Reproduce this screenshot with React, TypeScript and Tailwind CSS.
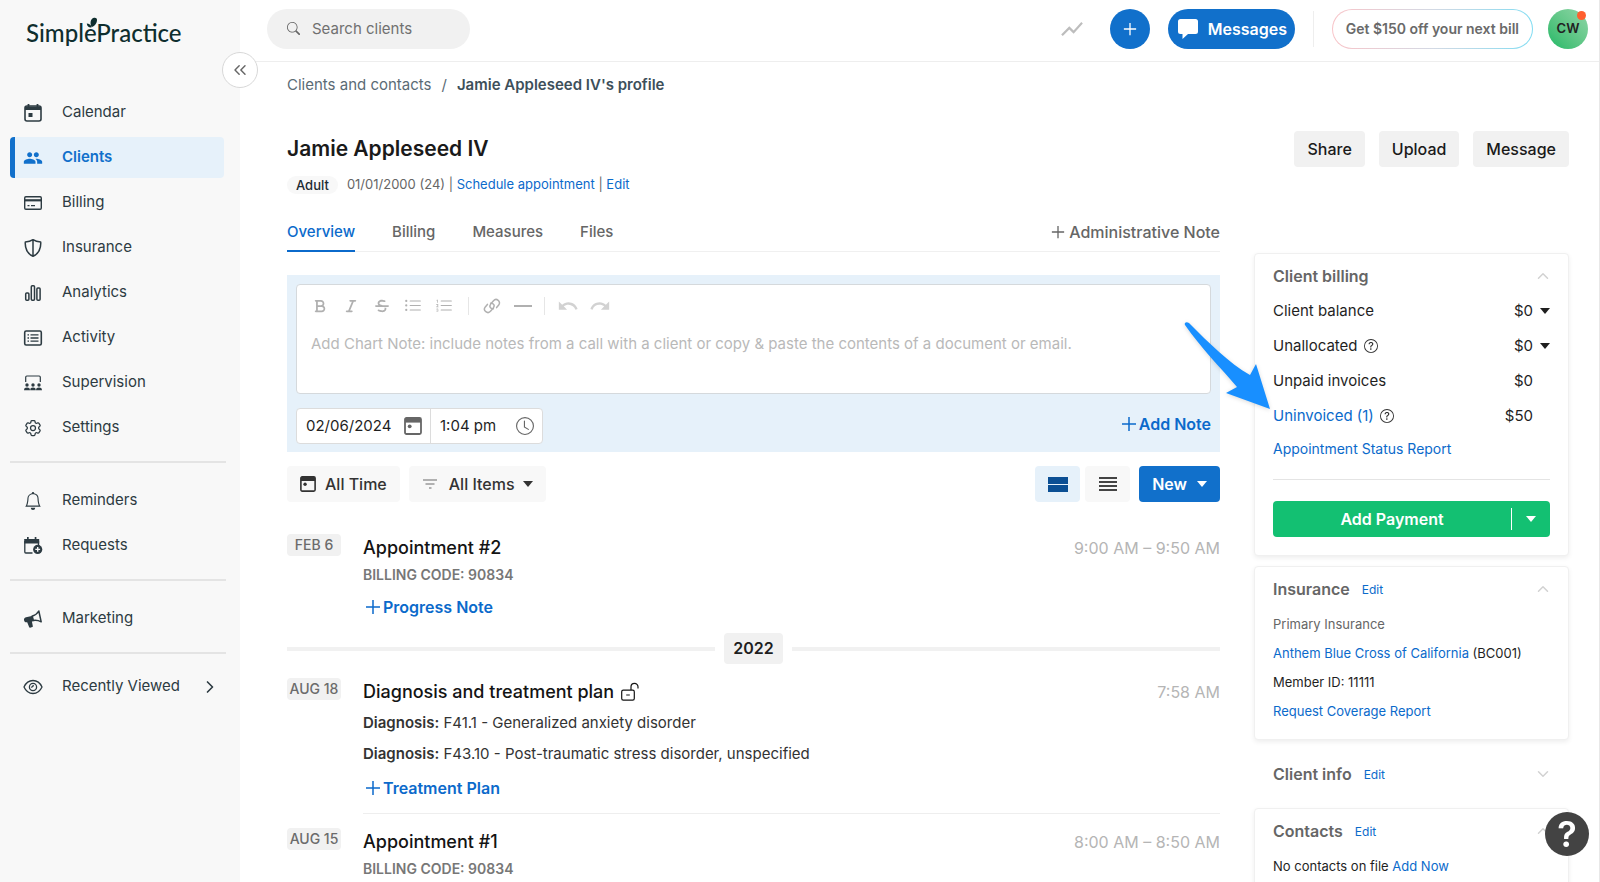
import { ReactNode, useState } from 'react';
import { ChevronDown, ChevronRight, ChevronsLeft, ChevronUp } from 'lucide-react';
import { BsBell, BsClock, BsListOl, BsListUl, BsQuestionCircle, BsSearch } from 'react-icons/bs';
import { FaBold, FaItalic, FaStrikethrough } from 'react-icons/fa6';
import { HiOutlineCog6Tooth } from 'react-icons/hi2';
import { MdPeople, MdRedo, MdShowChart, MdUndo } from 'react-icons/md';

const CalendarIcon = ({ className = 'size-5' }: { className?: string }) => (
  <svg viewBox="0 0 20 20" className={className} fill="none" aria-hidden="true">
    <rect x="2" y="3" width="16" height="15" rx="2" stroke="currentColor" strokeWidth="1.6" />
    <path d="M2 3.5h16V7H2zM4.6 1h1.8v3H4.6zM13.6 1h1.8v3h-1.8zM5.5 10h4v4h-4z" fill="currentColor" />
  </svg>
);

const DateIcon = ({ className = 'size-5' }: { className?: string }) => (
  <svg viewBox="0 0 18 18" className={className} fill="none" aria-hidden="true">
    <rect x="1" y="1" width="16" height="16" rx="1.5" stroke="currentColor" strokeWidth="1.8" />
    <path d="M1 1h16v4.6H1z" fill="currentColor" />
    <circle cx="5.7" cy="9.3" r="1.9" fill="currentColor" />
  </svg>
);

const CardIcon = () => (
  <svg viewBox="0 0 20 20" className="size-5" fill="none" stroke="currentColor" aria-hidden="true">
    <rect x="1.7" y="3.7" width="16.6" height="12.6" rx="1.2" strokeWidth="1.4" />
    <path d="M2 7.3h16" strokeWidth="2.2" />
    <path d="M4.5 12.7h2M8 12.7h4" strokeWidth="1.2" />
  </svg>
);

const ShieldIcon = () => (
  <svg viewBox="0 0 20 20" className="size-5" fill="none" stroke="currentColor" strokeWidth="1.5" strokeLinejoin="round" aria-hidden="true">
    <path d="M10 1.7c2 1.4 5 2.2 7.7 2.3.4 6-1.8 11.5-7.7 14.3C4.1 15.5 1.9 10 2.3 4 5 3.9 8 3.1 10 1.7zM10 1.7v16.6" />
  </svg>
);

const BarsIcon = () => (
  <svg viewBox="0 0 20 20" className="size-5" fill="none" stroke="currentColor" strokeWidth="1.5" aria-hidden="true">
    <rect x="2.7" y="10" width="3.2" height="7.3" rx="1" />
    <rect x="8.3" y="2.7" width="3.2" height="14.6" rx="1" />
    <rect x="13.9" y="5" width="3.2" height="12.3" rx="1" />
  </svg>
);

const ActivityIcon = () => (
  <svg viewBox="0 0 20 20" className="size-5" fill="none" stroke="currentColor" aria-hidden="true">
    <rect x="1.7" y="3" width="16.6" height="14" rx="1.4" strokeWidth="1.6" />
    <path d="M4.5 6.8H6M7.5 6.8h8M4.5 10H6M7.5 10h8M4.5 13.2H6M7.5 13.2h8" strokeWidth="1.3" />
  </svg>
);

const SupervisionIcon = () => (
  <svg viewBox="0 0 20 20" className="size-5" aria-hidden="true">
    <path d="M2.7 9V4.2c0-.8.5-1.2 1.2-1.2h12.2c.7 0 1.2.4 1.2 1.2V9" fill="none" stroke="currentColor" strokeWidth="1.2" />
    <g fill="currentColor">
      <circle cx="4" cy="12" r="1.7" />
      <circle cx="10" cy="12" r="1.7" />
      <circle cx="16" cy="12" r="1.7" />
      <path d="M1 17.2c.2-2 1.2-2.6 3-2.6s2.800.6 3 2.6zM7.200 17.2c.2-2 1-2.6 2.800-2.600s2.600.6 2.800 2.600zM13 17.200c.2-2 1.200-2.600 3-2.600s2.800.6 3 2.600z" />
    </g>
  </svg>
);

const RequestIcon = () => (
  <svg viewBox="0 0 20 20" className="size-5" aria-hidden="true">
    <path d="M9.5 17H2.8c-.6 0-1-.4-1-1V5M15.5 5v5" fill="none" stroke="currentColor" strokeWidth="1.3" />
    <path d="M1.2 3h15v4.500h-15zM4 1h1.700v3H4zM11.700 1h1.700v3h-1.700z" fill="currentColor" />
    <circle cx="14.7" cy="13.4" r="4.6" fill="currentColor" />
    <path d="M14.7 11v4.800M12.300 13.400h4.800" stroke="#f8f8f8" strokeWidth="1.4" />
  </svg>
);

const HornIcon = () => (
  <svg viewBox="0 0 20 20" className="size-5" aria-hidden="true">
    <path d="M9 7.300c3-.9 5.300-2.700 6.800-5.300l2.400 10.800c-2.700-1.400-5.400-1.900-8.200-1.300z" fill="none" stroke="currentColor" strokeWidth="1.5" strokeLinejoin="round" />
    <path d="M10 6.800 3 8.300C1.300 8.700.7 10 1.100 11.400c.4 1.400 1.400 2.200 3.100 1.900l1.900 4.800c.2.500.6.700 1 .6l2.200-.6c.5-.1.700-.5.500-1L8.900 12.400l2-.5z" fill="currentColor" />
  </svg>
);

const EyeIcon = () => (
  <svg viewBox="0 0 20 20" className="size-5" fill="none" stroke="currentColor" strokeWidth="1.3" aria-hidden="true">
    <path d="M1 10c2-4.400 5.200-6.500 9-6.500s7 2.100 9 6.500c-2 4.400-5.200 6.500-9 6.500S3 14.400 1 10z" />
    <circle cx="10" cy="10" r="3.6" />
    <path d="M8 10.200A2 2 0 0 0 10.200 8" />
  </svg>
);

const UnlockIcon = () => (
  <svg viewBox="0 0 20 20" className="size-5" fill="none" stroke="currentColor" strokeWidth="1.2" aria-hidden="true">
    <rect x="1.7" y="8.2" width="12.6" height="10" rx="1.6" />
    <path d="M11 8V4.800a3.500 3.500 0 0 1 7 0v1.700M6.200 13h3.600" />
  </svg>
);

const LinkIcon = () => (
  <svg viewBox="0 0 18 18" className="size-[18px]" fill="none" stroke="currentColor" strokeWidth="1.5" strokeLinecap="round" aria-hidden="true">
    <path d="M10.400 11.800c-1.300.2-2.600-.4-3.200-1.400-.7-1.200-.3-2.400.6-3.500l2.500-3c1.300-1.500 3.500-1.700 4.900-.6 1.500 1.200 1.700 3.300.5 4.800l-2.100 2.500" />
    <path d="M7.600 6.200c1.300-.2 2.600.4 3.200 1.400.7 1.200.3 2.400-.6 3.500l-2.500 3c-1.300 1.500-3.500 1.700-4.900.6C1.300 13.500 1.100 11.400 2.300 9.900l2.100-2.500" />
  </svg>
);

const Caret = ({ className = '' }: { className?: string }) => (
  <svg viewBox="0 0 10 6" className={`w-2.5 h-1.5 ${className}`} aria-hidden="true">
    <path d="M0 0h10L5 6z" fill="currentColor" />
  </svg>
);

const ThinPlus = ({ className = 'size-4' }: { className?: string }) => (
  <svg viewBox="0 0 16 16" className={className} stroke="currentColor" strokeWidth="1.5" aria-hidden="true">
    <path d="M8 1v14M1 8h14" />
  </svg>
);

const navGroups = [
  [
    { label: 'Calendar', icon: <CalendarIcon /> },
    { label: 'Clients', icon: <MdPeople className="size-5" /> },
    { label: 'Billing', icon: <CardIcon /> },
    { label: 'Insurance', icon: <ShieldIcon /> },
    { label: 'Analytics', icon: <BarsIcon /> },
    { label: 'Activity', icon: <ActivityIcon /> },
    { label: 'Supervision', icon: <SupervisionIcon /> },
    { label: 'Settings', icon: <HiOutlineCog6Tooth className="size-5" /> },
  ],
  [
    { label: 'Reminders', icon: <BsBell className="size-[18px]" /> },
    { label: 'Requests', icon: <RequestIcon /> },
  ],
  [{ label: 'Marketing', icon: <HornIcon /> }],
  [{ label: 'Recently Viewed', icon: <EyeIcon /> }],
];

const Sidebar = () => (
  <aside className="relative w-60 shrink-0 bg-[#f8f8f8] text-[15px] text-[#2d3b42]">
    <a href="#" className="relative block w-fit ml-[26px] mt-[15px] font-['Lato',sans-serif] text-2xl leading-9 font-medium text-[#0f2e2e]">
      SimplePractice
      <svg viewBox="0 0 12 12" className="absolute left-[60px] top-[2px] size-3" aria-hidden="true">
        <path d="M5.500 9.500C4 7 4 2 8 .8c1.500-.4 3 .2 3 2C11 6 9 9.500 5.500 10zM5.500 10.500C3 10.800 1 9.500.8 6.500 3 6.500 5 7.500 5.500 10.500z" fill="currentColor" />
      </svg>
    </a>
    <nav className="mt-[41px] pl-2.5 pr-3.5">
      {navGroups.map((group, index) => (
        <div
          key={index}
          className={
            index === 0
              ? 'flex flex-col gap-1'
              : 'flex flex-col gap-1 mt-[13px] pt-[17px] last:pt-3 border-t-2 border-[#e4e4e4]'
          }
        >
          {group.map(({ label, icon }) => (
            <a
              key={label}
              href="#"
              className={
                label === 'Clients'
                  ? 'flex items-center h-[41px] mr-0.5 rounded-sm border-l-[5px] border-[#1170cb] bg-[#e6f1fa] pl-2 text-[#1170cb] font-semibold'
                  : 'flex items-center h-[41px] pl-[13px]'
              }
            >
              <span className="flex w-5 justify-center mr-[19px]">{icon}</span>
              {label}
              {label === 'Recently Viewed' && <ChevronRight className="size-5 ml-5" />}
            </a>
          ))}
        </div>
      ))}
    </nav>
    <button
      aria-label="Collapse menu"
      className="absolute z-10 -right-[18px] top-[52px] flex size-9 items-center justify-center rounded-full border border-[#d8d8d8] bg-white text-[#666]"
    >
      <ChevronsLeft className="size-5" strokeWidth={1.75} />
    </button>
  </aside>
);

const TopBar = () => (
  <header className="flex items-center h-[62px] shrink-0 border-b border-[#eee] pb-1 pl-[27px] pr-[11px]">
    <label className="flex items-center w-[203px] h-10 rounded-full bg-[#f1f1f1] pl-5 text-[#666]">
      <BsSearch className="size-[13px] shrink-0" />
      <input
        type="text"
        aria-label="Search clients"
        placeholder="Search clients"
        className="ml-3 w-36 h-6 bg-transparent text-[15px] outline-none placeholder:text-[#707070]"
      />
    </label>
    <div className="flex items-center ml-auto">
      <MdShowChart className="size-[26px] text-[#bdbdbd]" />
      <button aria-label="Add" className="flex size-10 items-center justify-center rounded-full bg-[#1170cb] text-white ml-[25px]">
        <ThinPlus className="size-3.5" />
      </button>
      <button className="flex items-center h-10 w-[127px] rounded-full bg-[#1170cb] pl-2.5 text-white font-semibold ml-[18px]">
        <svg viewBox="0 0 20 20" className="size-5 mr-2.5" aria-hidden="true">
          <path d="M2.500 0h15A2.500 2.500 0 0 1 20 2.500v10a2.500 2.500 0 0 1-2.500 2.500H10l-5.500 5v-5h-2A2.500 2.500 0 0 1 0 12.500v-10A2.500 2.500 0 0 1 2.500 0z" fill="currentColor" />
        </svg>
        Messages
      </button>
      <span className="w-px h-9 bg-[#eee] ml-[18px]" />
      <button className="h-10 rounded-full bg-gradient-to-r from-[#f8c4c8] via-[#d3d9e4] to-[#7fdcf2] p-px ml-[18px]">
        <span className="flex h-full items-center rounded-full bg-white px-[13px] text-sm font-semibold text-[#6a6a6a]">
          Get $150 off your next bill
        </span>
      </button>
      <button className="relative size-10 rounded-full bg-gradient-to-tr from-[#12b866] to-[#8fd6a8] text-[13px] font-semibold text-[#222] ml-[15px]">
        CW
        <span className="absolute right-0.5 top-0.5 size-[9px] rounded-full bg-[#ff5f2e]" />
      </button>
    </div>
  </header>
);

const tools = [
  { label: 'Bold', icon: <FaBold className="size-3.5" /> },
  { label: 'Italic', icon: <FaItalic className="size-3.5" /> },
  { label: 'Strikethrough', icon: <FaStrikethrough className="size-3.5" /> },
  { label: 'Bulleted list', icon: <BsListUl className="size-[18px]" /> },
  { label: 'Numbered list', icon: <BsListOl className="size-[18px]" /> },
];

const Composer = () => {
  const [note, setNote] = useState('');

  return (
    <section className="mt-[23px] bg-[#e6f1fa] px-[9px] pt-[9px] pb-2">
      <div className="rounded border border-[#d5d9dc] bg-white pt-[9px] px-3.5">
        <div className="flex items-center h-6 text-[#b0b0b0]">
          {tools.map(({ label, icon }) => (
            <button key={label} aria-label={label} className="flex w-[18px] justify-center mr-[13px]">
              {icon}
            </button>
          ))}
          <span className="w-px h-[18px] bg-[#e6e6e6] ml-0.5" />
          <button aria-label="Link" className="ml-3.5"><LinkIcon /></button>
          <button aria-label="Horizontal rule" className="ml-[13px] flex w-[18px] h-4 items-center">
            <span className="h-0.5 w-full bg-current" />
          </button>
          <span className="w-px h-[18px] bg-[#e6e6e6] mx-3" />
          <button aria-label="Undo" className="text-[#d2d2d2]"><MdUndo className="size-[22px]" /></button>
          <button aria-label="Redo" className="ml-2.5 text-[#d2d2d2]"><MdRedo className="size-[22px]" /></button>
        </div>
        <textarea
          aria-label="Chart note"
          value={note}
          onChange={(e) => setNote(e.target.value)}
          placeholder="Add Chart Note: include notes from a call with a client or copy & paste the contents of a document or email."
          className="block mt-3.5 w-full h-[61px] resize-none bg-transparent text-[15px] leading-6 outline-none placeholder:text-[#b9b9b9]"
        />
      </div>
      <div className="flex items-start justify-between mt-3.5">
        <div className="flex h-9 rounded border border-[#dcdcdc] bg-white text-[15px] text-[#1f1f1f]">
          <label className="flex items-center w-[134px] border-r border-[#dcdcdc] pl-[9px] pr-2">
            <input type="text" aria-label="Date" defaultValue="02/06/2024" className="w-[98px] outline-none" />
            <DateIcon className="size-[18px] shrink-0 text-[#666]" />
          </label>
          <label className="flex items-center w-[111px] pl-[9px] pr-1.5">
            <input type="text" aria-label="Time" defaultValue="1:04 pm" className="w-[76px] outline-none" />
            <BsClock className="size-[18px] shrink-0 text-[#666]" />
          </label>
        </div>
        <button className="flex items-center gap-0.5 h-8 font-semibold text-[#0b6acb]">
          <ThinPlus />
          Add Note
        </button>
      </div>
    </section>
  );
};

const Filters = () => (
  <div className="flex items-center h-9 mt-3.5 font-medium text-[#333]">
    <button className="flex items-center h-full rounded bg-[#f8f8f8] px-[13px]">
      <DateIcon className="size-4 mr-[9px]" />
      All Time
    </button>
    <button className="flex items-center h-full rounded bg-[#f8f8f8] pl-3.5 pr-[13px] ml-[9px]">
      <svg viewBox="0 0 14 10" className="w-3.5 h-2.5 mr-3 text-[#999]" stroke="currentColor" strokeWidth="1.4" aria-hidden="true">
        <path d="M0 1h14M2.500 5h9M6 9h2.500" />
      </svg>
      All Items
      <Caret className="ml-2" />
    </button>
    <button aria-label="Card view" className="flex items-center justify-center w-[45px] h-full rounded bg-[#e6f1fa] ml-auto">
      <span className="flex flex-col gap-px">
        <span className="w-5 h-[7px] bg-[#0b4f94]" />
        <span className="w-5 h-[7px] bg-[#0b4f94]" />
      </span>
    </button>
    <button aria-label="List view" className="flex flex-col items-center justify-center gap-0.5 w-[45px] h-full rounded bg-[#f8f8f8] ml-[5px]">
      {[0, 1, 2, 3].map((line) => (
        <span key={line} className="w-[18px] h-0.5 bg-[#444]" />
      ))}
    </button>
    <button className="flex items-center h-full rounded bg-[#1170cb] px-[13px] font-semibold text-white ml-[9px]">
      New
      <Caret className="ml-2.5" />
    </button>
  </div>
);

interface EntryProps {
  date: string;
  time: string;
  title: ReactNode;
  children: ReactNode;
}

const Entry = ({ date, time, title, children }: EntryProps) => (
  <article className="flex items-start">
    <time className="w-[54px] h-[22px] shrink-0 rounded bg-[#f1f1f1] text-center text-sm leading-[22px] font-medium text-[#6b6b6b]">
      {date}
    </time>
    <div className="flex-1 ml-[22px] pt-0.5">
      <div className="flex justify-between leading-6">
        <h3 className="flex items-center gap-1.5 text-lg leading-6 font-medium text-[#141414]">{title}</h3>
        <span className="text-[#b5b5b5]">{time}</span>
      </div>
      {children}
    </div>
  </article>
);

const BillingCode = () => <p className="mt-[5px] text-sm leading-5 font-semibold text-[#777]">BILLING CODE: 90834</p>;

const AddLink = ({ children }: { children: ReactNode }) => (
  <a href="#" className="flex items-center gap-0.5 mt-2.5 pl-0.5 leading-6 font-semibold text-[#0b6acb]">
    <ThinPlus />
    {children}
  </a>
);

const Timeline = () => (
  <section className="mt-8">
    <Entry date="FEB 6" time="9:00 AM – 9:50 AM" title="Appointment #2">
      <BillingCode />
      <AddLink>Progress Note</AddLink>
    </Entry>
    <div className="flex items-center gap-[9px] my-3.5">
      <span className="flex-1 h-1 bg-[#f1f1f1]" />
      <span className="w-[59px] rounded bg-[#f1f1f1] text-center leading-[31px] font-semibold text-[#1f1f1f]">2022</span>
      <span className="flex-1 h-1 bg-[#f1f1f1]" />
    </div>
    <Entry
      date="AUG 18"
      time="7:58 AM"
      title={
        <>
          Diagnosis and treatment plan <UnlockIcon />
        </>
      }
    >
      <p className="mt-[7px] text-[15px] leading-6 text-[#333]">
        <strong className="font-semibold">Diagnosis:</strong> F41.1 - Generalized anxiety disorder
      </p>
      <p className="mt-[7px] text-[15px] leading-6 text-[#333]">
        <strong className="font-semibold">Diagnosis:</strong> F43.10 - Post-traumatic stress disorder, unspecified
      </p>
      <AddLink>Treatment Plan</AddLink>
      <hr className="mt-[13px] border-[#eee]" />
    </Entry>
    <div className="mt-3.5">
      <Entry date="AUG 15" time="8:00 AM – 8:50 AM" title="Appointment #1">
        <BillingCode />
      </Entry>
    </div>
  </section>
);

interface PanelProps {
  title: string;
  edit?: boolean;
  closed?: boolean;
  className?: string;
  children?: ReactNode;
}

const Panel = ({ title, edit, closed, className = '', children }: PanelProps) => {
  const Chevron = closed ? ChevronDown : ChevronUp;
  return (
    <section className={className}>
      <header className="flex items-center h-6">
        <h2 className="leading-6 font-semibold text-[#666]">{title}</h2>
        {edit && <a href="#" className="ml-3 mt-0.5 text-xs text-[#0b6acb]">Edit</a>}
        <button aria-label={`Toggle ${title}`} className="ml-auto -mr-0.5 text-[#d2d2d2]">
          <Chevron className="size-[18px]" />
        </button>
      </header>
      {children}
    </section>
  );
};

const cardClass = 'rounded border border-[#f0f0f0] bg-white px-[18px] pt-2.5 pb-[18px] shadow-[0_2px_5px_rgba(0,0,0,0.07)]';

const balances = [
  { label: 'Client balance', amount: '$0', caret: true },
  { label: 'Unallocated', amount: '$0', caret: true, help: true },
  { label: 'Unpaid invoices', amount: '$0' },
  { label: 'Uninvoiced (1)', amount: '$50', help: true, link: true },
];

const ClientPanels = () => (
  <aside className="relative w-[315px] shrink-0 mt-[58px]">
    <Panel title="Client billing" className={cardClass}>
      <ul className="flex flex-col gap-[11px] mt-[11px]">
        {balances.map(({ label, amount, caret, help, link }) => (
          <li key={label} className="flex items-center h-6 text-[15px] text-[#1f1f1f]">
            {link ? <a href="#" className="text-[#0b6acb]">{label}</a> : label}
            {help && <BsQuestionCircle className="size-3.5 ml-1.5 text-[#333]" />}
            <span className="ml-auto">{amount}</span>
            <span className="flex w-[17px] justify-end">{caret && <Caret />}</span>
          </li>
        ))}
      </ul>
      <a href="#" className="block mt-[9px] text-sm leading-6 text-[#0b6acb]">Appointment Status Report</a>
      <hr className="mt-[18px] border-[#e4e4e4]" />
      <div className="flex items-center h-9 mt-[21px] rounded bg-[#13c072] font-semibold text-white">
        <button className="flex-1 h-full">Add Payment</button>
        <span className="w-px h-[22px] bg-white" />
        <button aria-label="More payment options" className="flex w-[38px] h-full items-center justify-center">
          <Caret />
        </button>
      </div>
    </Panel>
    <Panel title="Insurance" edit className={`${cardClass} mt-2.5`}>
      <div className="flex flex-col gap-[9px] mt-[13px] text-[13px] leading-5 text-[#1f1f1f]">
        <p className="text-[#666]">Primary Insurance</p>
        <p>
          <a href="#" className="text-[#0b6acb]">Anthem Blue Cross of California</a> (BC001)
        </p>
        <p>Member ID: 11111</p>
        <a href="#" className="text-[#0b6acb]">Request Coverage Report</a>
      </div>
    </Panel>
    <Panel title="Client info" edit closed className="px-[19px] py-[22px]" />
    <Panel title="Contacts" edit className={cardClass}>
      <p className="mt-[13px] text-[13px] leading-5 text-[#1f1f1f]">
        No contacts on file <a href="#" className="text-[#0b6acb]">Add Now</a>
      </p>
    </Panel>
    <svg viewBox="0 0 90 92" className="absolute -left-[71px] top-[67px] w-[90px] h-[92px] drop-shadow-sm" aria-hidden="true">
      <path d="M2 5C1 3 3 1 6 3c20 20 40 40 61 52l6-11 14 45-44-16 11-6C37 47 18 28 2 5z" fill="#188fff" />
    </svg>
  </aside>
);

const tabs = ['Overview', 'Billing', 'Measures', 'Files'];

const App = () => {
  const [activeTab, setActiveTab] = useState('Overview');

  return (
    <div className="flex h-screen overflow-hidden border-r border-[#e8e8e8] bg-white font-['Inter',sans-serif] text-base">
      <Sidebar />
      <div className="flex flex-1 flex-col min-w-0">
        <TopBar />
        <main className="flex-1 overflow-hidden pl-[47px] pr-[30px] pt-[11px]">
          <nav aria-label="Breadcrumb" className="flex text-[15px] leading-6 text-[#5b6b75]">
            <a href="#">Clients and contacts</a>
            <span className="mx-2.5">/</span>
            <span className="font-semibold text-[#3d4f5a]">Jamie Appleseed IV's profile</span>
          </nav>
          <div className="flex items-center mt-[34px]">
            <h1 className="text-[21px] leading-9 font-semibold text-[#1a1a1a]">Jamie Appleseed IV</h1>
            <div className="flex gap-3.5 ml-auto">
              {['Share', 'Upload', 'Message'].map((action) => (
                <button key={action} className="h-9 rounded bg-[#f1f1f1] px-[13px] font-medium text-[#1a1a1a]">
                  {action}
                </button>
              ))}
            </div>
          </div>
          <div className="flex items-center h-5 mt-2 text-[13px] text-[#666]">
            <span className="h-[18px] rounded-full bg-[#f8f8f8] px-[9px] leading-[18px] font-medium text-[#1d2b33] mr-[9px]">Adult</span>
            <span>
              01/01/2000 (24) | <a href="#" className="text-[#0b6acb]">Schedule appointment</a> |{' '}
              <a href="#" className="text-[#0b6acb]">Edit</a>
            </span>
          </div>
          <div className="flex gap-[34px]">
            <div className="flex-1 min-w-0">
              <div className="flex mt-[25px] gap-[37px] border-b border-[#f0f0f0] font-medium text-[#666]">
                {tabs.map((tab) => (
                  <button
                    key={tab}
                    onClick={() => setActiveTab(tab)}
                    className={
                      tab === activeTab
                        ? '-mb-px border-b-2 border-[#0b6acb] pb-1.5 text-[15px] leading-6 text-[#0b6acb]'
                        : '-mb-px border-b-2 border-transparent pb-1.5 text-[15px] leading-6'
                    }
                  >
                    {tab}
                  </button>
                ))}
                <button className="flex items-center gap-1 h-6 ml-auto leading-6">
                  <ThinPlus className="size-3.5" />
                  Administrative Note
                </button>
              </div>
              <Composer />
              <Filters />
              <Timeline />
            </div>
            <ClientPanels />
          </div>
        </main>
      </div>
      <button aria-label="Help" className="fixed right-[11px] bottom-[26px] size-11 rounded-full bg-[#434343] text-4xl leading-none font-semibold text-white">
        ?
      </button>
    </div>
  );
};

export default App;
